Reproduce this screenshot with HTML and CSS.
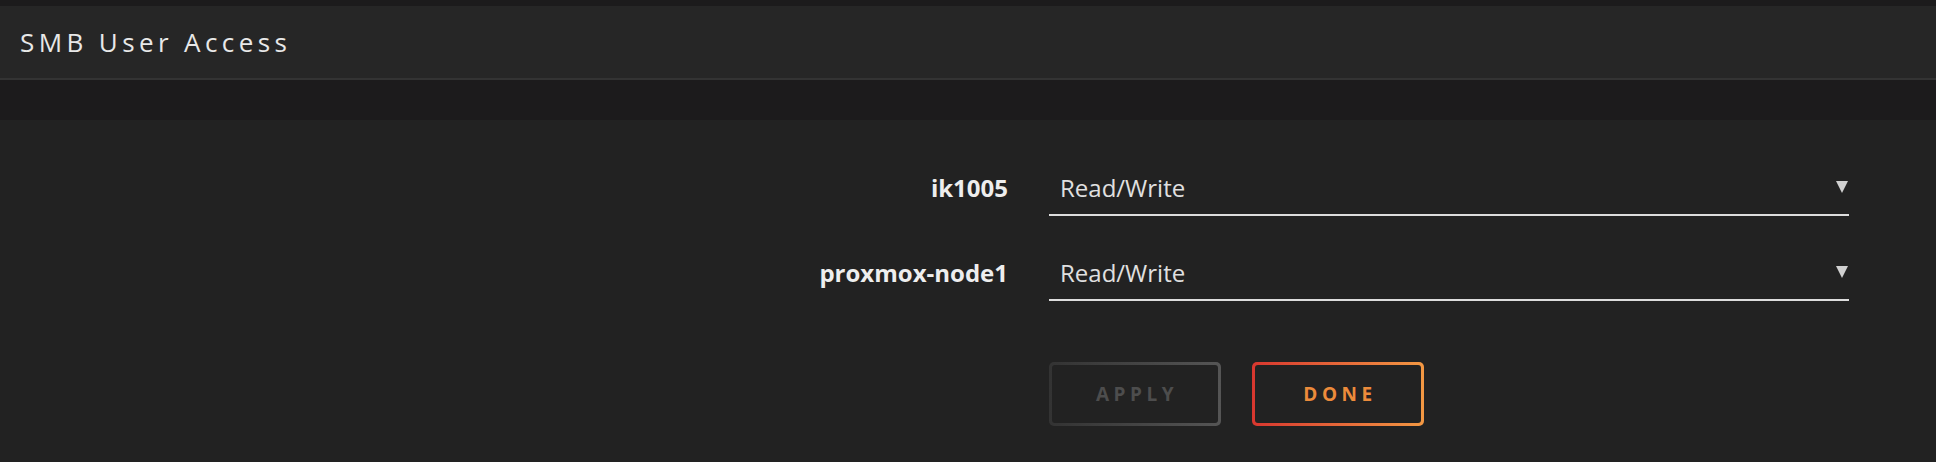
FILE: index.html
```html
<!DOCTYPE html>
<html>
<head>
<meta charset="utf-8">
<link rel="stylesheet" href="styles.css">
</head>
<body>
<div class="page">
  <div class="topstrip"></div>
  <header class="header">
    <h1 class="title">SMB User Access</h1>
  </header>
  <div class="spacer"></div>
  <main class="content">
    <div class="form">
      <div class="label">ik1005</div>
      <div class="select">
        <span class="value">Read/Write</span>
        <span class="arrow"></span>
      </div>
      <div class="label">proxmox-node1</div>
      <div class="select">
        <span class="value">Read/Write</span>
        <span class="arrow"></span>
      </div>
      <div class="actions">
        <button class="btn btn-apply"><span>APPLY</span></button>
        <button class="btn btn-done"><span>DONE</span></button>
      </div>
    </div>
  </main>
</div>
</body>
</html>
```
FILE: styles.css
```css
* { box-sizing: border-box; }
html, body { margin: 0; padding: 0; }
body {
  background: #222222;
  font-family: "Open Sans", "Noto Sans", sans-serif;
  color: #e6e6e6;
}
.page {
  min-height: 462px;
  display: flex;
  flex-direction: column;
}
.topstrip {
  height: 6px;
  background: #1c1b1c;
}
.header {
  height: 74px;
  background: #262626;
  border-bottom: 2px solid #333333;
  display: flex;
  align-items: center;
  padding-left: 20px;
}
.title {
  margin: 0;
  font-size: 26px;
  font-weight: 400;
  letter-spacing: 4.4px;
  color: #e8e8e8;
}
.spacer {
  height: 40px;
  background: #1c1b1c;
}
.content {
  flex: 1;
  background: #222222;
  padding-top: 48px;
}
.form {
  display: grid;
  grid-template-columns: 1008px 800px;
  column-gap: 41px;
  row-gap: 37px;
  align-items: end;
}
.label {
  text-align: right;
  font-weight: 700;
  font-size: 24px;
  color: #eeeeee;
  line-height: 32px;
  padding-bottom: 12px;
}
.select {
  height: 48px;
  border-bottom: 2px solid #dddddd;
  display: flex;
  align-items: flex-end;
  justify-content: space-between;
  padding: 0 1px 10px 11px;
}
.value {
  font-size: 24px;
  line-height: 32px;
  color: #e0e0e0;
}
.arrow {
  width: 0;
  height: 0;
  border-left: 6px solid transparent;
  border-right: 6px solid transparent;
  border-top: 12px solid #d0d0d0;
  margin-bottom: 11px;
}
.actions {
  grid-column: 2;
  display: flex;
  gap: 31px;
  margin-top: 24px;
}
.btn {
  width: 172px;
  height: 64px;
  border: none;
  border-radius: 5px;
  padding: 3px;
  font-family: "Open Sans", "Noto Sans", sans-serif;
  font-weight: 700;
  font-size: 19px;
  letter-spacing: 4.5px;
  cursor: pointer;
}
.btn span {
  display: flex;
  align-items: center;
  justify-content: center;
  width: 100%;
  height: 100%;
  background: #222222;
  border-radius: 3px;
  padding-left: 4px;
}
.btn-apply {
  background: linear-gradient(90deg, #333333, #555555);
  color: #4d4d4d;
}
.btn-done {
  background: linear-gradient(90deg, #d8372f, #f39843);
  color: #ec8b3b;
}
```
